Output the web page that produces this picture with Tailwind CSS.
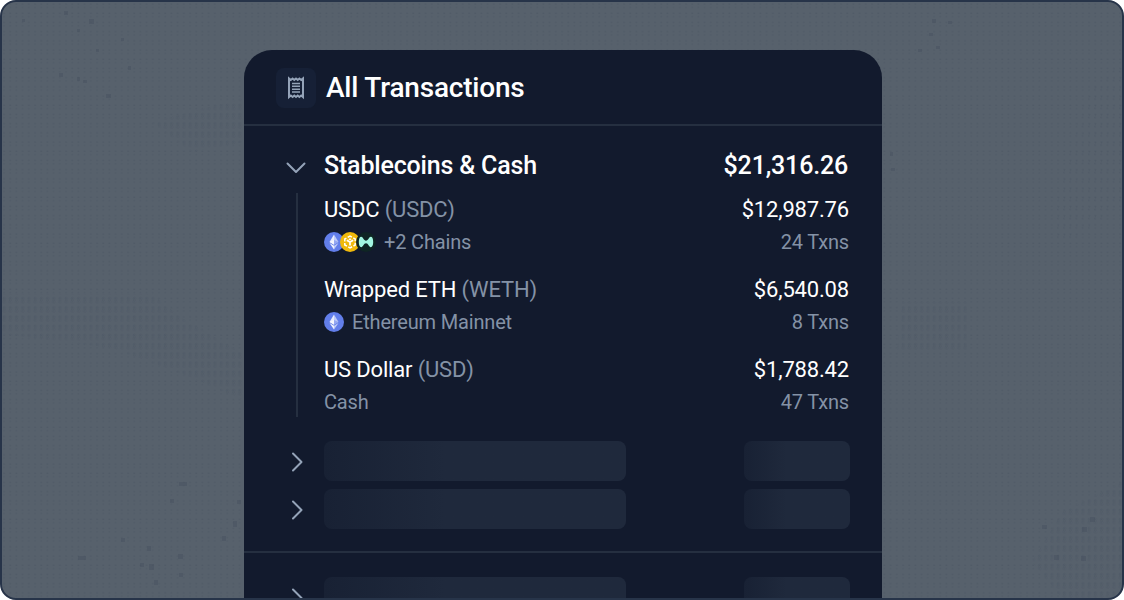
<!DOCTYPE html>
<html lang="en">
<head>
<meta charset="utf-8">
<title>All Transactions</title>
<script src="https://cdn.jsdelivr.net/npm/@tailwindcss/browser@4"></script>
</head>
<body class="bg-white overflow-hidden font-['Roboto',sans-serif] text-white">
<svg width="0" height="0" class="absolute">
  <defs>
    <symbol id="eth" viewBox="0 0 20 20">
      <circle cx="10" cy="10" r="10" fill="#627eea"/>
      <path d="M10 2.6 5.5 10.1 10 12.8z" fill="#fff" fill-opacity=".85"/>
      <path d="M10 2.6 14.5 10.1 10 12.8z" fill="#fff" fill-opacity=".6"/>
      <path d="M10 8.1 5.5 10.1 10 12.8z" fill="#fff" fill-opacity=".6"/>
      <path d="M10 8.1 14.5 10.1 10 12.8z" fill="#627eea" fill-opacity=".45"/>
      <path d="M5.5 11 10 17.4V13.7z" fill="#fff" fill-opacity=".9"/>
      <path d="M14.5 11 10 17.4V13.7z" fill="#fff" fill-opacity=".6"/>
    </symbol>
    <symbol id="right" viewBox="0 0 12 20"><path d="M2 1.5 10.5 10 2 18.5" fill="none" stroke="#94a3b8" stroke-width="2" stroke-linecap="round" stroke-linejoin="round"/></symbol>
  </defs>
</svg>
<main class="relative w-[1124px] h-[600px] rounded-[16px] border-2 border-[#273449] bg-[#57616c] overflow-hidden">
  <svg class="absolute inset-0" width="1120" height="596">
    <defs>
      <pattern id="dots" width="6.2" height="9.2" patternUnits="userSpaceOnUse">
        <path d="M1.2 2h1.7M1.2 5.4h1.7" stroke="#3f4a5b" stroke-opacity=".28" stroke-width="1.3"/>
      </pattern>
      <pattern id="rings" width="6.2" height="9.2" patternUnits="userSpaceOnUse">
        <path d="M.8 2.2a1.5 1.4 0 1 0 3 0a1.5 1.4 0 1 0-3 0M.6 5.4a1.7 1.6 0 1 0 3.4 0a1.7 1.6 0 1 0-3.4 0" fill="none" stroke="#3f4a5b" stroke-opacity=".2" stroke-width=".8"/>
      </pattern>
      <pattern id="slashes" width="6.2" height="9.2" patternUnits="userSpaceOnUse">
        <path d="M1 5.6 3 1.6" stroke="#3f4a5b" stroke-opacity=".2" stroke-width=".8"/>
      </pattern>
    </defs>
    <rect width="1120" height="596" fill="url(#dots)"/>
    <path d="M1085 90 1120 60V200L1070 240 1050 240 1060 170z" fill="url(#slashes)"/>
    <path d="M0 292H150L180 316 242 352V398L180 372 110 346 0 332zM150 120 242 96V140L190 150zM900 300H965V350H895zM1120 480V596H1060L1030 560 1060 510z" fill="url(#rings)"/>
    <g fill="#3f4a5b" fill-opacity=".3">
      <path d="M87 17h5v5h-5zM62 9h4v4h-4zM75 27h3v3h-3zM119 36h3v3h-3zM57 71h4v4h-4zM81 78h4v3h-4zM104 92h5v4h-5zM94 47h3v3h-3zM20 17h3v3h-3zM126 64h3v4h-3zM75 75h3v4h-3z"/>
      <path d="M177 480h8v4h-8zM168 497h4v4h-4zM145 544h4v5h-4zM138 561h4v4h-4zM147 562h5v6h-5zM176 552h5v5h-5zM220 534h4v5h-4zM231 519h4v6h-4zM152 578h4v5h-4zM119 536h4v4h-4zM76 554h8v4h-8zM235 498h4v4h-4zM177 571h4v4h-4z"/>
      <path d="M930 17h4v4h-4zM946 19h4v3h-4zM927 31h4v3h-4zM934 44h4v3h-4zM916 47h4v3h-4zM888 150h3v4h-3zM889 166h4v3h-4zM1040 523h5v4h-5zM1080 525h5v5h-5zM1088 515h5v5h-5zM1052 553h5v5h-5zM1079 554h5v5h-5z"/>
    </g>
  </svg>
  <section class="relative ml-[242px] mt-12 w-[638px] h-[600px] rounded-t-[28px] bg-[#121a2d]">
    <header class="flex h-[76px] items-center gap-[10px] border-b-2 border-[#252f40] pl-8 pt-[2px]">
      <span class="flex size-10 items-center justify-center rounded-lg bg-[#162036]">
        <svg width="18" height="24" viewBox="0 0 18 24" fill="none" stroke="#94a3b8">
          <path d="M2 2.5 3.8 4 5.6 2.5 7.3 4 9 2.5 10.7 4 12.4 2.5 14.2 4 16 2.5V21L14.2 19.5 12.4 21 10.7 19.5 9 21 7.3 19.5 5.6 21 3.8 19.5 2 21z" stroke-width="2"/>
          <path d="M5 7.4h8M5 10.3h8M5 13.2h8M5 16.1h8" stroke-width="1.5"/>
        </svg>
      </span>
      <h1 class="text-[28px] leading-10 font-medium tracking-[-0.2px] whitespace-nowrap">All Transactions</h1>
    </header>
    <div class="flex h-[67px] items-center pl-[42px] pr-[34px] pb-[2px] pt-[14px]">
      <svg class="mt-[5px]" width="20" height="12" viewBox="0 0 20 12" fill="none"><path d="M1.5 1.5 10 10 18.5 1.5" stroke="#94a3b8" stroke-width="2" stroke-linecap="round" stroke-linejoin="round"/></svg>
      <h2 class="ml-[18px] text-[25px] font-medium tracking-[-0.18px] whitespace-nowrap">Stablecoins &amp; Cash</h2>
      <span class="ml-auto text-[25px] font-medium tracking-[-0.18px]">$21,316.26</span>
    </div>
    <div class="ml-[52px] mr-[33px] h-[224px] border-l-2 border-[#252f40] pl-[26px] pt-[1px] text-[20px] tracking-[-0.17px] text-[#8492a6]">
      <div class="h-20">
        <div class="flex h-[30px] items-center justify-between text-[22px]"><span class="text-white">USDC <span class="text-[#8492a6]">(USDC)</span></span><span class="text-white">$12,987.76</span></div>
        <div class="flex h-9 items-center justify-between">
          <div class="flex items-center">
            <svg width="20" height="20"><use href="#eth"/></svg>
            <svg class="-ml-1" width="20" height="20" viewBox="0 0 20 20" fill="none">
              <circle cx="10" cy="10" r="10" fill="#f0b90b"/>
              <path d="M10 4.1 15.2 7v6L10 15.9 4.8 13V7z" stroke="#fff" stroke-width="1.5" stroke-dasharray="4.4 1.5" stroke-dashoffset="2.2"/>
              <path d="M6.8 8.2 10 10l3.2-1.8M10 10v3.6" stroke="#fff" stroke-width="1.7"/>
              <path d="m10 6.2 1.7 1L10 8.2l-1.7-1z" fill="#fff"/>
            </svg>
            <svg class="-ml-1" width="20" height="20" viewBox="0 0 20 20">
              <circle cx="10" cy="10" r="10" fill="#0f2524"/>
              <path d="M2.8 10c0-3.3 1-5.2 2.4-5.2C7 4.8 7.7 8.7 10 8.7S13 4.8 14.8 4.8c1.4 0 2.4 1.9 2.4 5.2s-1 5.2-2.4 5.2c-1.8 0-2.5-3.9-4.8-3.9s-3 3.9-4.8 3.9C3.8 15.2 2.8 13.3 2.8 10z" fill="#a2f6e1"/>
            </svg>
            <span class="ml-2">+2 Chains</span>
          </div>
          <span>24 Txns</span>
        </div>
      </div>
      <div class="h-20">
        <div class="flex h-[30px] items-center justify-between text-[22px]"><span class="text-white">Wrapped ETH <span class="text-[#8492a6]">(WETH)</span></span><span class="text-white">$6,540.08</span></div>
        <div class="flex h-9 items-center justify-between">
          <div class="flex items-center gap-2"><svg width="20" height="20"><use href="#eth"/></svg><span>Ethereum Mainnet</span></div>
          <span>8 Txns</span>
        </div>
      </div>
      <div class="h-16">
        <div class="flex h-[30px] items-center justify-between text-[22px]"><span class="text-white">US Dollar <span class="text-[#8492a6]">(USD)</span></span><span class="text-white">$1,788.42</span></div>
        <div class="flex h-9 items-center justify-between"><span>Cash</span><span>47 Txns</span></div>
      </div>
    </div>
    <div class="mt-6 flex flex-col gap-2 pb-[22px] pl-[47px] pr-8">
      <div class="flex h-10 items-center">
        <svg class="mt-[2px]" width="12" height="20"><use href="#right"/></svg>
        <div class="ml-[21px] h-10 w-[302px] rounded-lg bg-linear-to-r from-[#182134] to-[#1f293c] to-40%"></div>
        <div class="ml-auto h-10 w-[106px] rounded-lg bg-linear-to-r from-[#182134] to-[#1f293c] to-40%"></div>
      </div>
      <div class="flex h-10 items-center">
        <svg class="mt-[2px]" width="12" height="20"><use href="#right"/></svg>
        <div class="ml-[21px] h-10 w-[302px] rounded-lg bg-linear-to-r from-[#182134] to-[#1f293c] to-40%"></div>
        <div class="ml-auto h-10 w-[106px] rounded-lg bg-linear-to-r from-[#182134] to-[#1f293c] to-40%"></div>
      </div>
    </div>
    <div class="border-t-2 border-[#252f40] pt-6 pl-[47px] pr-8">
      <div class="flex h-10 items-center">
        <svg class="mt-[2px]" width="12" height="20"><use href="#right"/></svg>
        <div class="ml-[21px] h-10 w-[302px] rounded-lg bg-linear-to-r from-[#182134] to-[#1f293c] to-40%"></div>
        <div class="ml-auto h-10 w-[106px] rounded-lg bg-linear-to-r from-[#182134] to-[#1f293c] to-40%"></div>
      </div>
    </div>
  </section>
</main>
</body>
</html>
